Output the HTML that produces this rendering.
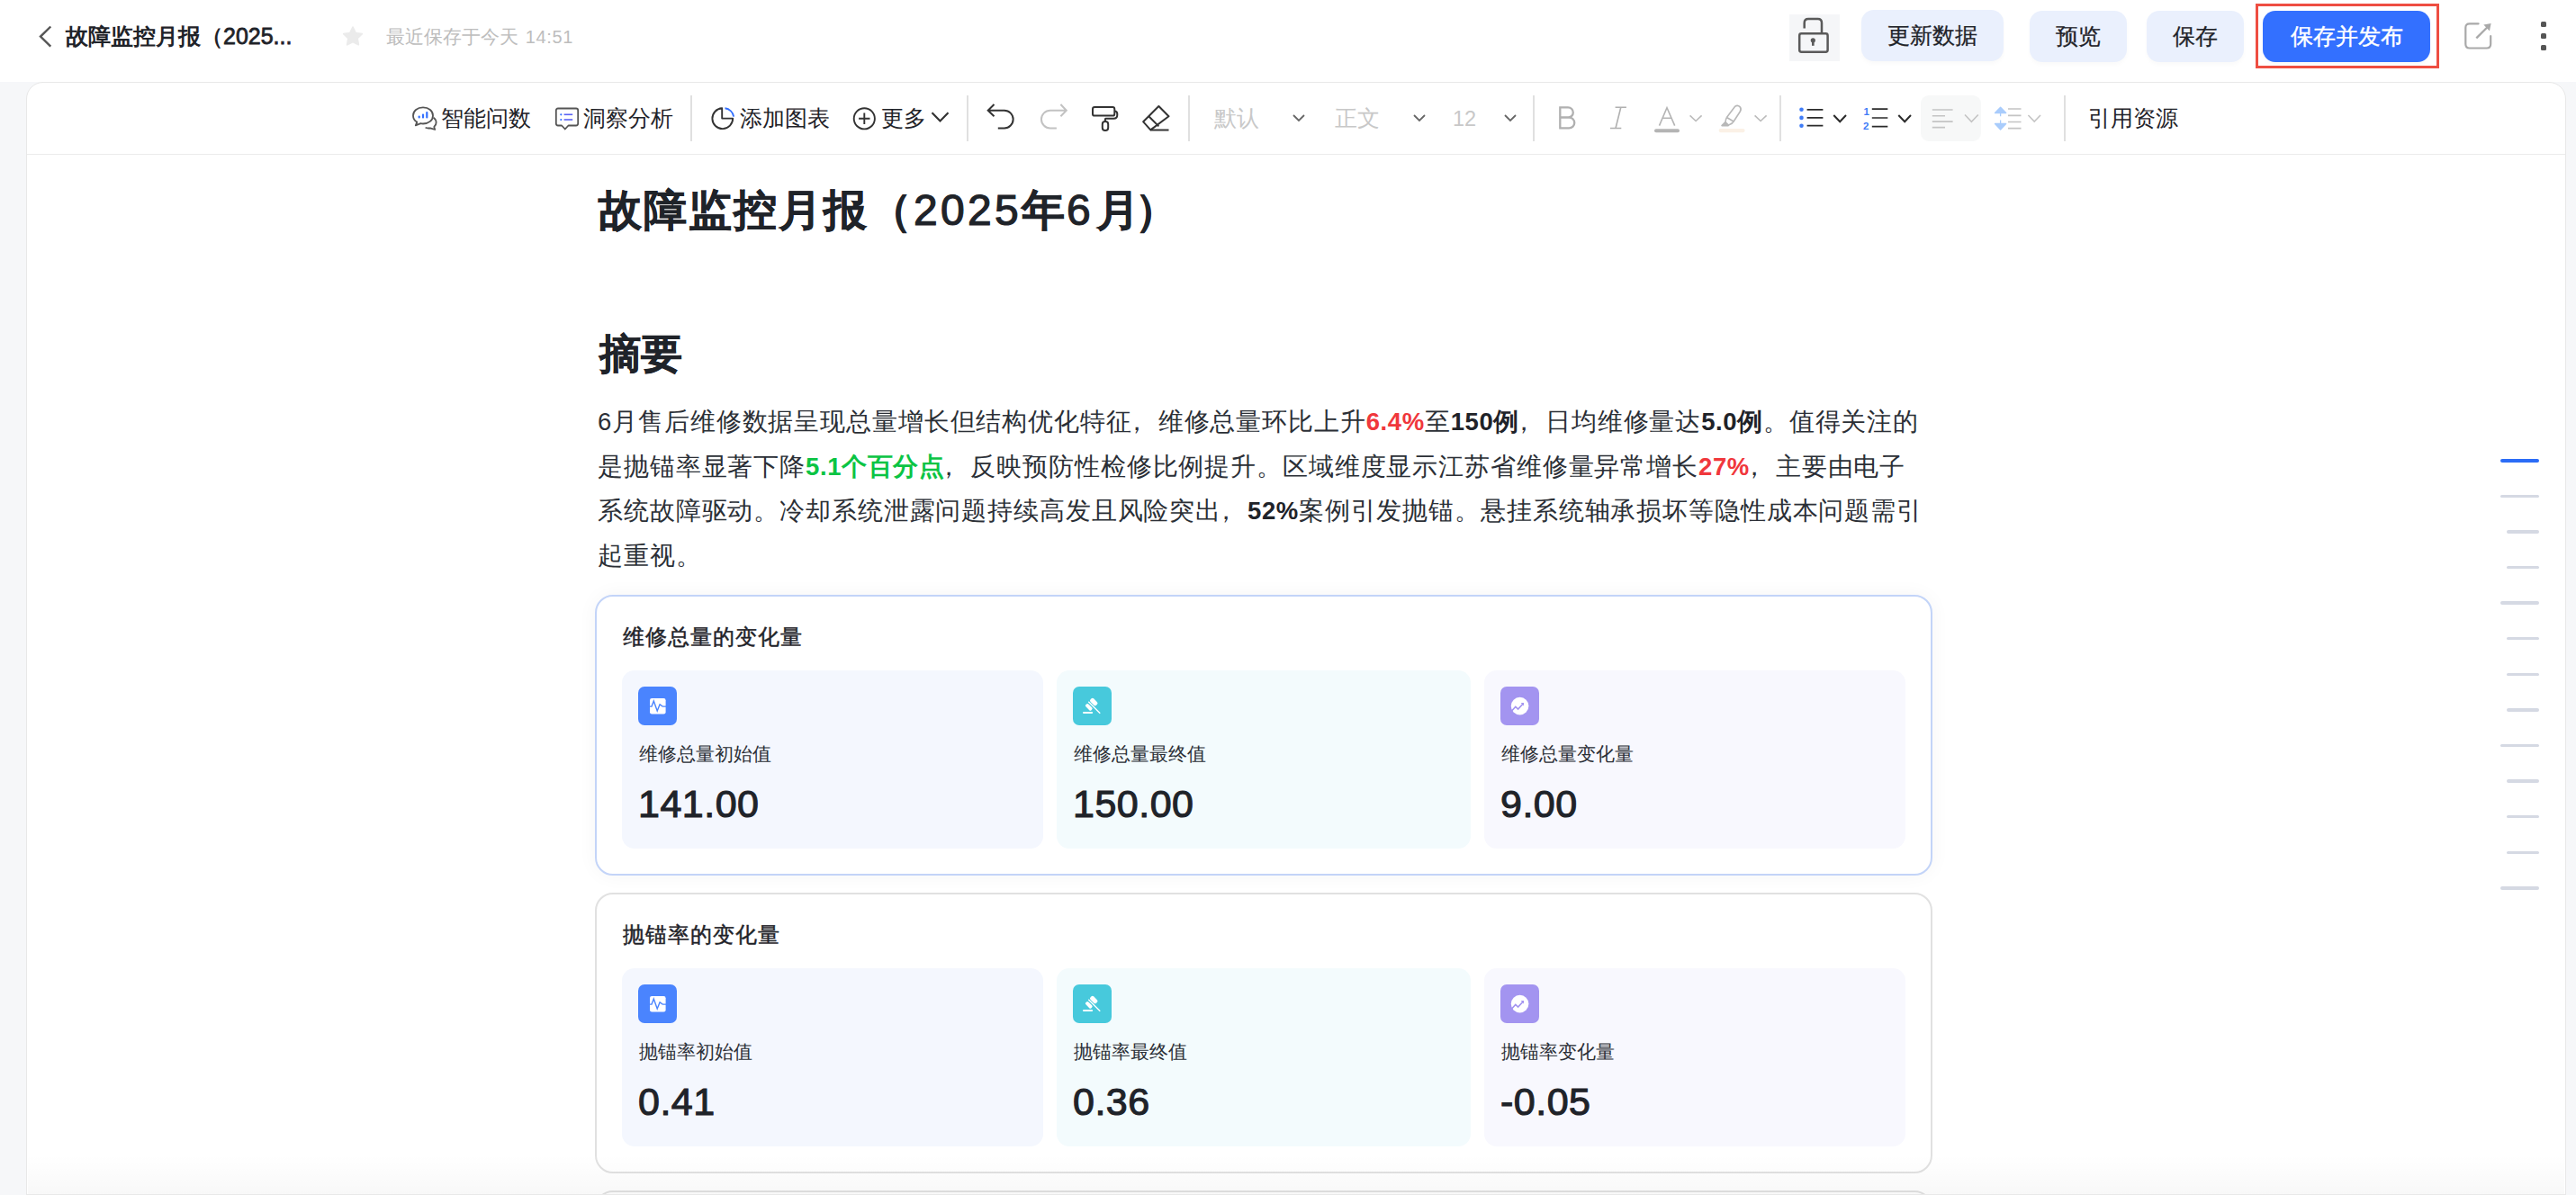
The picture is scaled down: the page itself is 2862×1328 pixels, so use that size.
<!DOCTYPE html>
<html><head><meta charset="utf-8">
<style>
*{box-sizing:border-box;margin:0;padding:0}
html,body{width:2862px;height:1328px;overflow:hidden;background:#f6f7f9;font-family:"Liberation Sans",sans-serif;color:#1f2329}
.abs{position:absolute}
svg{position:absolute;overflow:visible}
#hdr{position:absolute;left:0;top:0;width:2862px;height:91px;background:#fff}
.t{position:absolute;white-space:nowrap;line-height:1}
#panel{position:absolute;left:29px;top:91px;width:2822px;height:1300px;background:#fff;border:1.5px solid #e8e8e8;border-radius:19px}
#tbline{position:absolute;left:30px;top:170.5px;width:2820px;height:1.5px;background:#ebebeb}
.sep{position:absolute;top:106px;width:1.5px;height:51px;background:#e0e0e0}
.btn{position:absolute;border-radius:14px;background:#eaf0fd;font-size:25px;color:#1f2329;-webkit-text-stroke:0.25px #1f2329;text-align:center;line-height:56px;height:57px;box-shadow:0 3px 5px rgba(0,0,0,0.025)}
.card{position:absolute;left:661px;width:1486px;height:312px;background:#fff;border:2px solid #e1e1e1;border-radius:20px}
.card.sel{border-color:#c3d4f8;box-shadow:0 0 22px rgba(0,0,0,0.045)}
.ctitle{position:absolute;left:29px;top:32.5px;font-size:24px;letter-spacing:1px;line-height:1;white-space:nowrap;-webkit-text-stroke:0.45px #1f2329;color:#1f2329}
.tile{position:absolute;top:82px;height:198px;border-radius:14px}
.ico{position:absolute;left:18px;top:18px;width:43px;height:43px;border-radius:7px}
.ico svg{left:0;top:0}
.lab{position:absolute;left:19px;top:82px;font-size:21px;line-height:1;white-space:nowrap;color:#2b2f36}
.val{position:absolute;left:18px;top:127px;font-size:43px;letter-spacing:0.5px;line-height:1;font-weight:normal;-webkit-text-stroke:1.1px #1f2329;white-space:nowrap;color:#1f2329}
.toc{position:absolute;height:4px;border-radius:2px;background:#d5d9e3}
.tbt{position:absolute;top:119px;font-size:25px;line-height:1;white-space:nowrap;color:#1f2329}
.para{position:absolute;left:664px;font-size:27.5px;line-height:1;letter-spacing:0.88px;white-space:nowrap;color:#2b2f36}
.para b{color:#1f2329;letter-spacing:0.6px}
.cm{display:inline-block;transform:translateX(-9px)}
</style></head>
<body>
<div id="hdr">
  <svg style="left:0;top:0" width="60" height="70"><path d="M56.3 29.5 L45 40.6 L56.3 51.7" fill="none" stroke="#555" stroke-width="2.4"/></svg>
  <div class="t" style="left:73px;top:28px;font-size:25px;font-weight:bold">故障监控月报（<span style="font-weight:normal;-webkit-text-stroke:0.8px #1f2329;letter-spacing:0px">2025...</span></div>
  <svg style="left:378px;top:27px" width="28" height="27" viewBox="0 0 24 24"><path d="M12 2.8l2.8 5.8 6.3.9-4.6 4.4 1.1 6.3L12 17.2l-5.6 3 1.1-6.3L2.9 9.5l6.3-.9z" fill="#ebebeb" stroke="#ebebeb" stroke-width="1.6" stroke-linejoin="round"/></svg>
  <div class="t" style="left:429px;top:29.5px;font-size:21px;color:#bdbdbd">最近保存于今天 <span style="font-size:20px;margin-left:2px;letter-spacing:0.6px">14:51</span></div>

  <div class="abs" style="left:1988px;top:16px;width:56px;height:52px;background:#f5f6f8"></div>
  <svg style="left:1988px;top:16px" width="56" height="52">
    <rect x="11.2" y="21.3" width="31.4" height="20.4" rx="2.2" fill="none" stroke="#5a5a5a" stroke-width="2.5"/>
    <path d="M16.7 15.6 V9.5 Q16.7 5.1 21 5.1 H31.7 Q36 5.1 36 9.5 V20" fill="none" stroke="#5a5a5a" stroke-width="2.5"/>
    <circle cx="26.3" cy="28.8" r="2.6" fill="#5a5a5a"/><rect x="25" y="28.8" width="2.6" height="6" fill="#5a5a5a"/>
  </svg>
  <div class="btn" style="left:2068px;top:11px;width:158px">更新数据</div>
  <div class="btn" style="left:2255px;top:12px;width:108px">预览</div>
  <div class="btn" style="left:2385px;top:12px;width:108px">保存</div>
  <div class="abs" style="left:2506px;top:4px;width:204px;height:72px;border:3px solid #ee4e42"></div>
  <div class="btn" style="left:2514px;top:12px;width:186px;background:#3370ff;color:#fff;-webkit-text-stroke:0.4px #fff">保存并发布</div>
  <svg style="left:2736px;top:22px" width="36" height="36">
    <path d="M17.6 4.3 H7.8 Q3.3 4.3 3.3 8.8 V27 Q3.3 31.5 7.8 31.5 H26.7 Q31.2 31.5 31.2 27 V18.2" fill="none" stroke="#a9a9a9" stroke-width="2.2" stroke-linecap="round"/>
    <path d="M15.3 20.4 L27.5 8.2" stroke="#a9a9a9" stroke-width="2.3"/>
    <path d="M23.3 5.6 L31.6 4 L30 12.4 Z" fill="#a9a9a9"/>
  </svg>
  <div class="abs" style="left:2823px;top:24px;width:6px;height:6px;border-radius:1.5px;background:#555"></div>
  <div class="abs" style="left:2823px;top:37px;width:6px;height:6px;border-radius:1.5px;background:#555"></div>
  <div class="abs" style="left:2823px;top:50px;width:6px;height:6px;border-radius:1.5px;background:#555"></div>
</div>

<div id="panel"></div>
<div id="tbline"></div>

<!-- toolbar -->
<svg style="left:456px;top:116px" width="32" height="32" viewBox="0 0 32 32">
  <path d="M14 3.3 C7.6 3.3 3 7.3 3 12.4 C3 15.4 4.7 18 7.3 19.6 L5.8 23.3 L11.4 21.2 C12.2 21.4 13.1 21.5 14 21.5 C20.4 21.5 25 17.5 25 12.4 C25 7.3 20.4 3.3 14 3.3 Z" fill="none" stroke="#555" stroke-width="1.8" stroke-linejoin="round"/>
  <path d="M25.6 14.8 C27.6 16.2 28.6 18.1 28.6 20.2 C28.6 22.1 27.8 23.6 26.3 24.9 L27.2 28 L22 26.3 C20.4 26.6 18.2 26.5 16.6 25.8" fill="none" stroke="#555" stroke-width="1.8" stroke-linejoin="round"/>
  <rect x="8.6" y="12.6" width="2.2" height="3" rx="1" fill="#3370ff"/><rect x="12.9" y="10.4" width="2.2" height="5.2" rx="1" fill="#3370ff"/><rect x="17.2" y="8" width="2.2" height="7.6" rx="1" fill="#3370ff"/>
</svg>
<div class="tbt" style="left:490px">智能问数</div>
<svg style="left:615px;top:118px" width="30" height="28" viewBox="0 0 30 28">
  <path d="M5 2.5 H25 Q27.2 2.5 27.2 4.7 V19.3 Q27.2 21.5 25 21.5 H16.5 L12.8 25.5 L9.1 21.5 H5 Q2.8 21.5 2.8 19.3 V4.7 Q2.8 2.5 5 2.5 Z" fill="none" stroke="#555" stroke-width="1.8" stroke-linejoin="round"/>
  <circle cx="8.3" cy="9.3" r="1.1" fill="#3370ff"/><circle cx="8.3" cy="15" r="1.1" fill="#3370ff"/>
  <rect x="11.6" y="8.5" width="9.6" height="1.6" fill="#5b63f5"/><rect x="11.6" y="14.2" width="9.6" height="1.6" fill="#5b63f5"/>
</svg>
<div class="tbt" style="left:648px">洞察分析</div>
<div class="sep" style="left:767px"></div>
<svg style="left:789px;top:117px" width="30" height="30" viewBox="0 0 30 30">
  <path d="M13.2 3.3 A11.4 11.4 0 1 0 25.2 14.6 L13.2 14.6 Z" fill="none" stroke="#333" stroke-width="1.9" stroke-linejoin="round"/>
  <path d="M16.5 3.3 A11.4 11.4 0 0 1 26.2 12.6" fill="none" stroke="#3370ff" stroke-width="1.9"/>
</svg>
<div class="tbt" style="left:822px">添加图表</div>
<svg style="left:946px;top:117px" width="30" height="30" viewBox="0 0 30 30">
  <circle cx="14.3" cy="14.8" r="11.6" fill="none" stroke="#333" stroke-width="1.9"/>
  <path d="M14.3 8.6 V21 M8.1 14.8 H20.5" stroke="#333" stroke-width="1.9"/>
</svg>
<div class="tbt" style="left:979px">更多</div>
<svg style="left:1033px;top:122px" width="24" height="16"><path d="M2.5 3.3 L11.5 12.5 L20.5 3.3" fill="none" stroke="#333" stroke-width="2.2"/></svg>
<div class="sep" style="left:1074px"></div>
<svg style="left:1090px;top:110px" width="44" height="40">
  <path d="M14.5 6 L7.7 12.7 L14.5 19.3 M7.7 12.7 H25.8 A9.85 9.85 0 0 1 25.8 32.4 H18.8" fill="none" stroke="#333" stroke-width="2"/>
</svg>
<svg style="left:1147px;top:110px" width="44" height="40">
  <path d="M31.4 6 L37.8 12.7 L31.4 19.3 M37.8 12.7 H19.8 A9.85 9.85 0 0 0 19.8 32.4 H26.9" fill="none" stroke="#c2c2c2" stroke-width="2"/>
</svg>
<svg style="left:1205px;top:110px" width="44" height="40">
  <rect x="9" y="9" width="24.3" height="9.6" rx="2.2" fill="none" stroke="#333" stroke-width="2"/>
  <path d="M33.3 13.6 Q36.3 13.8 36.3 16.6 V17.8 Q36.3 21.8 32.3 21.8 H23.5 Q22.9 21.8 22.9 22.5 V25" fill="none" stroke="#333" stroke-width="2"/>
  <rect x="19.8" y="25" width="6.4" height="9.9" rx="3" fill="none" stroke="#333" stroke-width="2"/>
</svg>
<svg style="left:1262px;top:110px" width="44" height="40">
  <path d="M25.4 8 L36.5 19.3 L16.3 34.4 L8.2 25.3 Z" fill="none" stroke="#333" stroke-width="2" stroke-linejoin="round"/>
  <path d="M14.3 19.3 L25.4 30.4 M16.3 34.4 H36.5" fill="none" stroke="#333" stroke-width="2"/>
</svg>
<div class="sep" style="left:1320px"></div>
<div class="tbt" style="left:1349px;color:#c8c8c8">默认</div>
<svg style="left:1434px;top:124px" width="18" height="14"><path d="M3 4 L9 10 L15 4" fill="none" stroke="#666" stroke-width="1.8"/></svg>
<div class="tbt" style="left:1483px;color:#c8c8c8">正文</div>
<svg style="left:1568px;top:124px" width="18" height="14"><path d="M3 4 L9 10 L15 4" fill="none" stroke="#666" stroke-width="1.8"/></svg>
<div class="tbt" style="left:1614px;top:121px;font-size:23.5px;color:#c8c8c8">12</div>
<svg style="left:1669px;top:124px" width="18" height="14"><path d="M3 4 L9 10 L15 4" fill="none" stroke="#666" stroke-width="1.8"/></svg>
<div class="sep" style="left:1703px"></div>
<svg style="left:1725px;top:110px" width="32" height="40"><path d="M8.3 9.3 V32.4 M7.2 9.3 H17.2 A5.6 5.6 0 0 1 17.2 20.5 H8.3 M8.3 20.5 H18.3 A5.95 5.95 0 0 1 18.3 32.4 H7.2" fill="none" stroke="#b0b0b0" stroke-width="2.3"/></svg>
<svg style="left:1780px;top:110px" width="36" height="40"><path d="M14.6 9.2 H26.9 M9 32.5 H21.3 M20.8 9.2 L15 32.5" fill="none" stroke="#b0b0b0" stroke-width="1.6"/></svg>
<svg style="left:1830px;top:110px" width="44" height="40">
  <path d="M13.5 29.6 L22 9.8 L30.7 29.6 M16.6 21.2 H27.4" fill="none" stroke="#b4b4b4" stroke-width="1.6"/>
  <rect x="8" y="33.3" width="28" height="4" rx="2" fill="#b4b4b4"/>
</svg>
<svg style="left:1874px;top:124px" width="20" height="14"><path d="M3.6 4.3 L10.1 10.5 L16.6 4.3" fill="none" stroke="#bbb" stroke-width="1.6"/></svg>
<svg style="left:1905px;top:110px" width="40" height="40">
  <path d="M22.5 8.4 Q25.5 6.2 28 8.6 Q30.2 11 28.3 14 L21.6 24.3 Q19.6 27.6 16.5 28.4 L15 29.6 L8 29.6 L12 25.5 Q12 22.8 13.8 20 Z" fill="none" stroke="#b8b8b8" stroke-width="1.6" stroke-linejoin="round"/>
  <path d="M13.5 20.5 L21.5 25.3" stroke="#b8b8b8" stroke-width="1.6"/>
  <path d="M8 29.6 L12.3 25 L16 28.5 L15 29.6 Z" fill="#b8b8b8"/>
  <rect x="4.6" y="33" width="29" height="4.2" rx="2.1" fill="#fbf1e6"/>
</svg>
<svg style="left:1946px;top:124px" width="20" height="14"><path d="M3.6 4.3 L10.1 10.5 L16.6 4.3" fill="none" stroke="#bbb" stroke-width="1.6"/></svg>
<div class="sep" style="left:1977px"></div>
<svg style="left:1995px;top:112px" width="34" height="36">
  <circle cx="6.5" cy="9.8" r="2.3" fill="#3f7cf7"/><circle cx="6.5" cy="18.9" r="2.3" fill="#3f7cf7"/><circle cx="6.5" cy="27.7" r="2.3" fill="#3f7cf7"/>
  <path d="M12.6 9.8 H30.4 M12.6 18.9 H30.4 M12.6 27.7 H30.4" stroke="#2b2b2b" stroke-width="1.7"/>
</svg>
<svg style="left:2034px;top:124px" width="20" height="14"><path d="M3.3 4 L10.2 11.3 L17 4" fill="none" stroke="#2b2b2b" stroke-width="2"/></svg>
<svg style="left:2066px;top:112px" width="36" height="36">
  <text x="4.4" y="15.6" font-family="Liberation Sans" font-size="11.5" font-weight="bold" fill="#3f7cf7">1</text>
  <text x="4" y="31.6" font-family="Liberation Sans" font-size="11.5" font-weight="bold" fill="#3f7cf7">2</text>
  <path d="M13.8 9.2 H31.3 M13.8 19 H31.3 M13.8 28.7 H31.3" stroke="#2b2b2b" stroke-width="1.7"/>
</svg>
<svg style="left:2106px;top:124px" width="20" height="14"><path d="M3.3 4 L10.2 11.3 L17 4" fill="none" stroke="#2b2b2b" stroke-width="2"/></svg>
<div class="abs" style="left:2134px;top:106px;width:67px;height:51px;border-radius:9px;background:#f7f8f8"></div>
<svg style="left:2134px;top:106px" width="67" height="51">
  <path d="M12.8 16 H35.6 M12.8 22.7 H27 M12.8 29.1 H35.6 M12.8 35.6 H27" stroke="#c4c4c4" stroke-width="1.6"/>
  <path d="M49 21.5 L56.4 29.3 L63.8 21.5" fill="none" stroke="#c4c4c4" stroke-width="1.6"/>
</svg>
<svg style="left:2212px;top:112px" width="60" height="36">
  <path d="M10.6 7.3 L4.5 13.5 H16.7 Z M10.6 13 V17.3 M10.6 21.6 V25.5 M4.5 25.5 H16.7 L10.6 32 Z" fill="#a9ccfc" stroke="#a9ccfc" stroke-width="1.3" stroke-linejoin="round"/>
  <path d="M19 9 H33.5 M19 16.4 H33.5 M19 23.5 H33.5 M19 30.6 H33.5" stroke="#c4c4c4" stroke-width="1.6"/>
  <path d="M41.4 16 L48.2 23 L55 16" fill="none" stroke="#c4c4c4" stroke-width="1.6"/>
</svg>
<div class="sep" style="left:2293px"></div>
<div class="tbt" style="left:2320px">引用资源</div>

<!-- content -->
<div class="t" style="left:665px;top:210px;font-size:48px;letter-spacing:2px;font-weight:bold;-webkit-text-stroke:0.5px #1f2329">故障监控月报（<span style="font-weight:normal;-webkit-text-stroke:1.2px #1f2329;letter-spacing:3.3px">2025</span>年<span style="font-weight:normal;-webkit-text-stroke:1.2px #1f2329;letter-spacing:6px">6</span><span style="letter-spacing:-5px">月</span>）</div>
<div class="t" style="left:665.5px;top:371px;font-size:45.5px;font-weight:bold;-webkit-text-stroke:0.5px #1f2329">摘要</div>

<div class="para" style="top:455px">6月售后维修数据呈现总量增长但结构优化特征<span class="cm">，</span>维修总量环比上升<b style="color:#f0373c">6.4%</b>至<b>150例</b><span class="cm">，</span>日均维修量达<b>5.0例</b>。值得关注的</div>
<div class="para" style="top:504.6px">是抛锚率显著下降<b style="color:#0bc444">5.1个百分点</b><span class="cm">，</span>反映预防性检修比例提升。区域维度显示江苏省维修量异常增长<b style="color:#f0373c">27%</b><span class="cm">，</span>主要由电子</div>
<div class="para" style="top:554.2px">系统故障驱动。冷却系统泄露问题持续高发且风险突出<span class="cm">，</span><b>52%</b>案例引发抛锚。悬挂系统轴承损坏等隐性成本问题需引</div>
<div class="para" style="top:603.8px">起重视。</div>

<div class="card sel" style="top:661px">
  <div class="ctitle">维修总量的变化量</div>
  <div class="tile" style="left:28px;width:468px;background:#f4f7fe">
    <div class="ico" style="background:#4a84fe"><svg width="43" height="43"><rect x="13" y="13" width="17.6" height="17.4" rx="2.2" fill="#fff"/><path d="M12 22.1 H15 L17.3 16.1 L21.2 27.1 L24.1 19.8 L26.5 21.6 L27.6 22.1 H31" fill="none" stroke="#4a84fe" stroke-width="1.4" stroke-linejoin="miter"/></svg></div>
    <div class="lab">维修总量初始值</div><div class="val">141.00</div></div>
  <div class="tile" style="left:511px;width:460px;background:#f3fbfd">
    <div class="ico" style="background:#47c9dc"><svg width="43" height="43"><g fill="#fff" transform="rotate(45)"><rect x="24" y="-6.9" width="9" height="5" rx="1.8"/><rect x="24.4" y="1.5" width="8.6" height="4.1" rx="1.6"/><rect x="24.1" y="-1.05" width="18.3" height="1.35"/></g><rect x="11" y="27.9" width="11.1" height="2.1" rx="1" fill="#fff"/></svg></div>
    <div class="lab">维修总量最终值</div><div class="val">150.00</div></div>
  <div class="tile" style="left:986px;width:468px;background:#f8f8fe">
    <div class="ico" style="background:#a394f0"><svg width="43" height="43"><circle cx="21.6" cy="21.6" r="9.8" fill="#fff"/><path d="M12.8 26.8 L16.8 22.4 L19.6 25.1 L25.2 19" fill="none" stroke="#a394f0" stroke-width="1.6"/><path d="M22.6 18.1 L26 18 L25.9 21.4 Z" fill="#a394f0"/></svg></div>
    <div class="lab">维修总量变化量</div><div class="val">9.00</div></div>
</div>
<div class="card" style="top:992px">
  <div class="ctitle">抛锚率的变化量</div>
  <div class="tile" style="left:28px;width:468px;background:#f4f7fe">
    <div class="ico" style="background:#4a84fe"><svg width="43" height="43"><rect x="13" y="13" width="17.6" height="17.4" rx="2.2" fill="#fff"/><path d="M12 22.1 H15 L17.3 16.1 L21.2 27.1 L24.1 19.8 L26.5 21.6 L27.6 22.1 H31" fill="none" stroke="#4a84fe" stroke-width="1.4" stroke-linejoin="miter"/></svg></div>
    <div class="lab">抛锚率初始值</div><div class="val">0.41</div></div>
  <div class="tile" style="left:511px;width:460px;background:#f3fbfd">
    <div class="ico" style="background:#47c9dc"><svg width="43" height="43"><g fill="#fff" transform="rotate(45)"><rect x="24" y="-6.9" width="9" height="5" rx="1.8"/><rect x="24.4" y="1.5" width="8.6" height="4.1" rx="1.6"/><rect x="24.1" y="-1.05" width="18.3" height="1.35"/></g><rect x="11" y="27.9" width="11.1" height="2.1" rx="1" fill="#fff"/></svg></div>
    <div class="lab">抛锚率最终值</div><div class="val">0.36</div></div>
  <div class="tile" style="left:986px;width:468px;background:#f8f8fe">
    <div class="ico" style="background:#a394f0"><svg width="43" height="43"><circle cx="21.6" cy="21.6" r="9.8" fill="#fff"/><path d="M12.8 26.8 L16.8 22.4 L19.6 25.1 L25.2 19" fill="none" stroke="#a394f0" stroke-width="1.6"/><path d="M22.6 18.1 L26 18 L25.9 21.4 Z" fill="#a394f0"/></svg></div>
    <div class="lab">抛锚率变化量</div><div class="val">-0.05</div></div>
</div>
<div class="card" style="top:1323px"></div>

<div class="abs" style="left:31px;top:1283px;width:2818px;height:44px;background:linear-gradient(rgba(0,0,0,0),rgba(0,0,0,0.028))"></div>
<div class="abs" style="left:29px;top:1327px;width:2822px;height:1px;background:#e8e8e8"></div>
<!-- toc -->
<div class="toc" style="left:2778px;top:510px;width:43px;background:#2b6cf6"></div>
<div class="toc" style="left:2778px;top:549.6px;width:43px;height:3.4px"></div>
<div class="toc" style="left:2785px;top:589.2px;width:36px;height:3.4px"></div>
<div class="toc" style="left:2785px;top:628.8px;width:36px;height:3.4px"></div>
<div class="toc" style="left:2778px;top:668.4px;width:43px;height:3.4px"></div>
<div class="toc" style="left:2785px;top:708px;width:36px;height:3.4px"></div>
<div class="toc" style="left:2785px;top:747.6px;width:36px;height:3.4px"></div>
<div class="toc" style="left:2785px;top:787.2px;width:36px;height:3.4px"></div>
<div class="toc" style="left:2778px;top:826.8px;width:43px;height:3.4px"></div>
<div class="toc" style="left:2785px;top:866.4px;width:36px;height:3.4px"></div>
<div class="toc" style="left:2785px;top:906px;width:36px;height:3.4px"></div>
<div class="toc" style="left:2785px;top:945.6px;width:36px;height:3.4px"></div>
<div class="toc" style="left:2778px;top:985.2px;width:43px;height:3.4px"></div>
</body></html>
